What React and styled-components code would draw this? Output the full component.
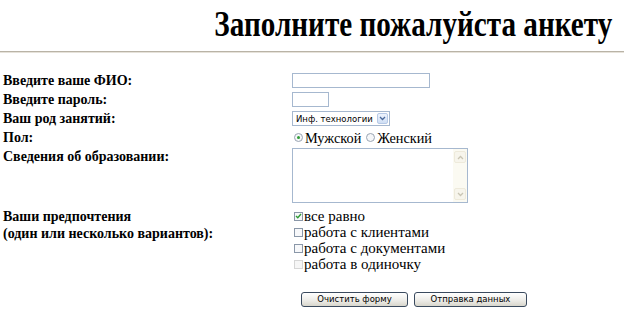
import React from 'react'
import styled, { createGlobalStyle } from 'styled-components'

const Global = createGlobalStyle`
  html, body { margin: 0; padding: 0; background: #fff; }
  body { font-family: "Liberation Serif", "Times New Roman", serif; color: #000; }
`

const Page = styled.div`
  width: 624px;
  height: 311px;
  overflow: hidden;
`

const Title = styled.h1`
  margin: 0;
  padding: 4px 12px 0 0;
  height: 46px;
  box-sizing: border-box;
  text-align: right;
  font-size: 36px;
  line-height: 40px;
  font-weight: bold;
  white-space: nowrap;
`

const TitleText = styled.span`
  display: inline-block;
  transform: scaleX(0.81);
  transform-origin: right center;
`

const Rule = styled.hr`
  margin: 5px 0 0 0;
  height: 0;
  border: none;
  border-top: 1px solid #b9b3a6;
  border-bottom: 1px solid #e6e2da;
`

const Form = styled.form`
  display: flex;
  flex-direction: column;
  padding: 18px 0 0 3px;
`

const Row = styled.div`
  display: grid;
  grid-template-columns: 289px 1fr;
  align-items: ${p => (p.$top ? 'start' : 'center')};
  min-height: ${p => p.$h || 19}px;
  margin-top: ${p => p.$mt || 0}px;
`

const Label = styled.div`
  font-weight: bold;
  font-size: 14px;
  line-height: ${p => p.$lh || 19}px;
`

const Field = styled.div`
  display: flex;
  flex-direction: ${p => (p.$col ? 'column' : 'row')};
  align-items: ${p => (p.$col ? 'flex-start' : 'center')};
  padding-top: ${p => p.$pt || 0}px;
  padding-left: ${p => p.$pl || 0}px;
  gap: ${p => p.$gap || 0}px;
`

const TextBox = styled.div`
  width: ${p => p.$w}px;
  height: 15px;
  box-sizing: border-box;
  border: 1px solid #a6b8cf;
  background: #fff;
`

const Select = styled.div`
  width: 98px;
  height: 15px;
  box-sizing: border-box;
  border: 1px solid #a6b8cf;
  display: flex;
  align-items: center;
  justify-content: space-between;
  font-family: "DejaVu Sans", Tahoma, sans-serif;
  font-size: 8.5px;
  padding-left: 3px;
  background: #fff;
`

const ArrowBox = styled.span`
  width: 11px;
  height: 11px;
  margin-right: 1px;
  box-sizing: border-box;
  border: 1px solid #b6c9e6;
  border-radius: 2px;
  background: linear-gradient(#eef4fd, #cfdef4);
  display: flex;
  align-items: center;
  justify-content: center;
`

const Option = styled.label`
  display: flex;
  align-items: center;
  font-size: ${p => p.$fs || 15}px;
  line-height: 16px;
  margin-right: ${p => p.$mr || 0}px;
`

const Radio = styled.span`
  width: 9px;
  height: 9px;
  box-sizing: border-box;
  border-radius: 50%;
  border: 1px solid #9aa5b3;
  background: #f6f7f9;
  margin: 0 2px 0 2px;
  display: flex;
  align-items: center;
  justify-content: center;
  &::after {
    content: '';
    display: ${p => (p.$on ? 'block' : 'none')};
    width: 3px;
    height: 3px;
    border-radius: 50%;
    background: #2f9b35;
  }
`

const Check = styled.span`
  width: 9px;
  height: 9px;
  box-sizing: border-box;
  border: 1px solid ${p => (p.$off ? '#d6d6d6' : '#8a97a8')};
  background: ${p => (p.$off ? '#f6f6f6' : '#f7f8fa')};
  margin: 0 1px 0 2px;
  display: flex;
  align-items: center;
  justify-content: center;
`

const Area = styled.div`
  width: 176px;
  height: 55px;
  box-sizing: border-box;
  border: 1px solid #a6b8cf;
  display: flex;
  justify-content: flex-end;
  background: #fff;
`

const Scroll = styled.div`
  width: 14px;
  background: #fbfaf2;
  display: flex;
  flex-direction: column;
  justify-content: space-between;
  align-items: center;
  padding: 2px 0;
  box-sizing: border-box;
`

const ScrollBtn = styled.span`
  width: 12px;
  height: 12px;
  box-sizing: border-box;
  border: 1px solid #eeeadb;
  border-radius: 2px;
  background: #f7f5ec;
  display: flex;
  align-items: center;
  justify-content: center;
`

const Button = styled.button`
  width: ${p => p.$w}px;
  height: 15px;
  padding: 0;
  box-sizing: border-box;
  border: 1px solid #3a4a5e;
  border-radius: 3px;
  background: linear-gradient(#ffffff, #ecebe6 60%, #d8d6cc);
  font-family: "DejaVu Sans", Tahoma, sans-serif;
  font-size: 8.5px;
  line-height: 13px;
  color: #000;
`

const Chevron = ({ up, color = '#4c6a9c' }) => (
  <svg width="7" height="5" viewBox="0 0 7 5">
    <path d={up ? 'M1 4 L3.5 1.5 L6 4' : 'M1 1 L3.5 3.5 L6 1'} stroke={color} strokeWidth="1.3" fill="none" />
  </svg>
)

const Tick = () => (
  <svg width="7" height="6" viewBox="0 0 7 6">
    <path d="M1 3 L2.8 4.8 L6 1" stroke="#2f9b35" strokeWidth="1.4" fill="none" />
  </svg>
)

export default function App() {
  return (
    <Page>
      <Global />
      <Title><TitleText>Заполните пожалуйста анкету</TitleText></Title>
      <Rule />
      <Form>
        <Row>
          <Label>Введите ваше ФИО:</Label>
          <Field><TextBox $w={138} /></Field>
        </Row>
        <Row>
          <Label>Введите пароль:</Label>
          <Field><TextBox $w={37} /></Field>
        </Row>
        <Row>
          <Label>Ваш род занятий:</Label>
          <Field>
            <Select>
              Инф. технологии
              <ArrowBox><Chevron /></ArrowBox>
            </Select>
          </Field>
        </Row>
        <Row>
          <Label>Пол:</Label>
          <Field>
            <Option $fs={14.3} $mr={3}><Radio $on />Мужской</Option>
            <Option $fs={14.3}><Radio />Женский</Option>
          </Field>
        </Row>
        <Row $top $h={56}>
          <Label>Сведения об образовании:</Label>
          <Field $pt={1}>
            <Area>
              <Scroll>
                <ScrollBtn><Chevron up color="#c9c5b4" /></ScrollBtn>
                <ScrollBtn><Chevron color="#c9c5b4" /></ScrollBtn>
              </Scroll>
            </Area>
          </Field>
        </Row>
        <Row $top $mt={5} $h={68}>
          <Label $lh={17}>Ваши предпочтения<br />(один или несколько вариантов):</Label>
          <Field $col>
            <Option><Check><Tick /></Check>все равно</Option>
            <Option><Check />работа с клиентами</Option>
            <Option><Check />работа с документами</Option>
            <Option><Check $off />работа в одиночку</Option>
          </Field>
        </Row>
        <Row $mt={14}>
          <div />
          <Field $gap={6} $pl={9}>
            <Button type="button" $w={107}>Очистить форму</Button>
            <Button type="button" $w={113}>Отправка данных</Button>
          </Field>
        </Row>
      </Form>
    </Page>
  )
}
